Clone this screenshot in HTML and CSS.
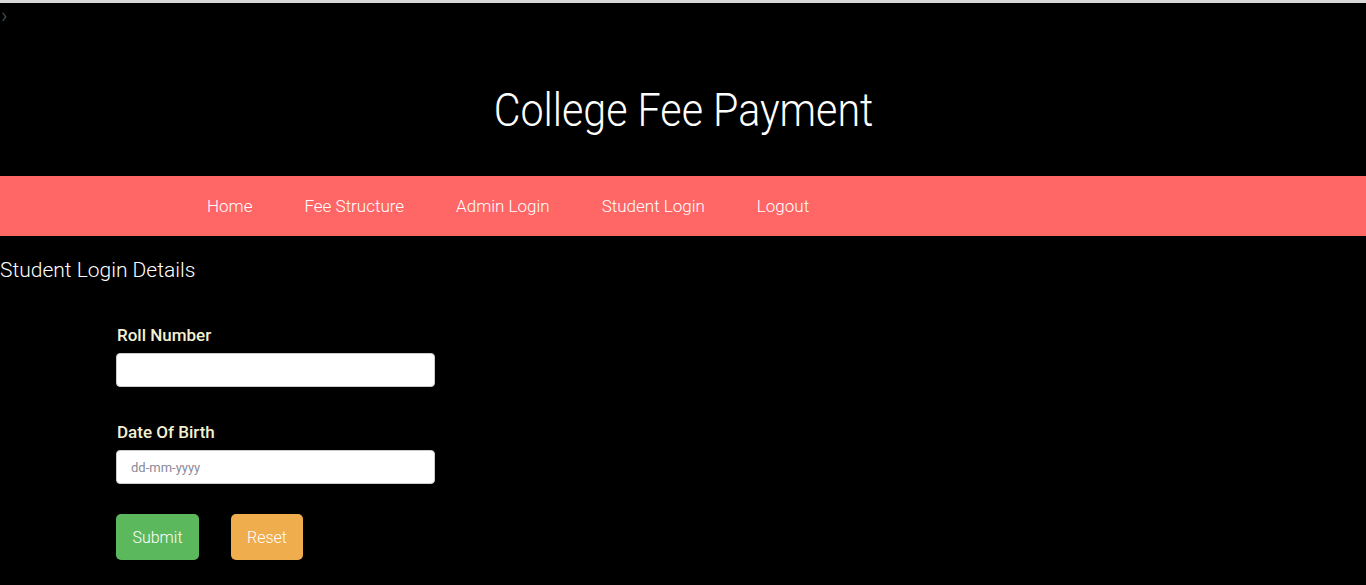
FILE: index.html
```html
<!DOCTYPE html>
<html>
<head>
<meta charset="utf-8">
<link rel="stylesheet" href="styles.css">
</head>
<body>
<div class="topline"></div>
<header class="header">
  <span class="chev">&#8250;</span>
  <h1 class="title">College Fee Payment</h1>
</header>
<nav class="nav">
  <a class="nav-link" href="#">Home</a>
  <a class="nav-link" href="#">Fee Structure</a>
  <a class="nav-link" href="#">Admin Login</a>
  <a class="nav-link" href="#">Student Login</a>
  <a class="nav-link" href="#">Logout</a>
</nav>
<main class="main">
  <h2 class="section-title">Student Login Details</h2>
  <form class="form">
    <label class="label">Roll Number</label>
    <input class="input" type="text">
    <label class="label label-second">Date Of Birth</label>
    <div class="input date-input"><span class="placeholder">dd-mm-yyyy</span></div>
    <div class="buttons">
      <button type="button" class="btn btn-submit">Submit</button>
      <button type="button" class="btn btn-reset">Reset</button>
    </div>
  </form>
</main>
</body>
</html>
```
FILE: styles.css
```css
html, body {
  margin: 0;
  padding: 0;
  background: #000;
  height: 100%;
  overflow: hidden;
}
body {
  font-family: Roboto, "Liberation Sans", sans-serif;
  font-weight: 300;
  color: #fff;
}
.topline {
  height: 3px;
  background: #d8d8d8;
}
.header {
  height: 173px;
  display: flex;
  align-items: center;
  justify-content: center;
  position: relative;
}
.chev {
  position: absolute;
  left: 1px;
  top: 2px;
  font-size: 22px;
  color: #4a5a5a;
  line-height: 22px;
}
.title {
  margin: 0;
  font-weight: 300;
  font-size: 47px;
  transform: scaleX(0.877);
  padding-top: 40px;
}
.nav {
  height: 60px;
  background: #ff6666;
  display: flex;
  align-items: center;
  padding-left: 207px;
}
.nav-link {
  color: #fff;
  text-decoration: none;
  font-size: 17px;
  font-weight: 300;
  margin-right: 52px;
}
.main {
  padding-top: 20px;
}
.section-title {
  margin: 0;
  font-size: 21px;
  font-weight: 300;
  line-height: 28px;
}
.form {
  display: flex;
  flex-direction: column;
  align-items: flex-start;
  padding-left: 116px;
  padding-top: 40px;
}
.label {
  color: #f3f0d2;
  font-weight: 500;
  font-size: 17px;
  line-height: 22px;
  margin-bottom: 7px;
  padding-left: 1px;
}
.label-second {
  margin-top: 34px;
}
.input {
  box-sizing: border-box;
  width: 319px;
  height: 34px;
  border: 1px solid #ccc;
  border-radius: 4px;
  background: #fff;
  margin: 0;
  padding: 6px 14px;
}
.date-input {
  display: flex;
  align-items: center;
}
.placeholder {
  color: #8a8a9a;
  font-size: 13px;
  font-weight: 400;
}
.buttons {
  display: flex;
  gap: 32px;
  margin-top: 30px;
}
.btn {
  height: 46px;
  border: none;
  border-radius: 5px;
  color: #fff;
  font-family: Roboto, "Liberation Sans", sans-serif;
  font-weight: 300;
  font-size: 16px;
  padding: 0;
}
.btn-submit {
  background: #5cb85c;
  width: 83px;
}
.btn-reset {
  background: #f0ad4e;
  width: 72px;
}
```
